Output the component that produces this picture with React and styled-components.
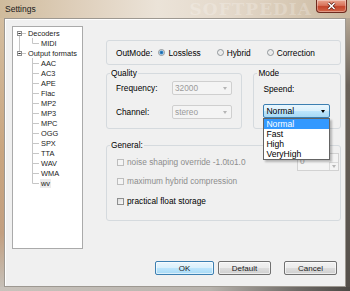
import React from 'react'
import styled, { createGlobalStyle } from 'styled-components'

const GlobalStyle = createGlobalStyle`
    html, body { margin:0; padding:0; }
    body {
        width:350px;
        height:291px;
        overflow:hidden;
        font-family:"Liberation Sans", Arial, sans-serif;
        font-size:8.3px;
        color:#000;
    }
`;

const treeItems = [
    { label: 'Decoders', cells: ['boxDown'] },
    { label: 'MIDI', cells: ['pipe', 'ell'] },
    { label: 'Output formats', cells: ['boxUp'] },
    ...['AAC', 'AC3', 'APE', 'Flac', 'MP2', 'MP3', 'MPC', 'OGG', 'SPX', 'TTA', 'WAV', 'WMA']
        .map(l => ({ label: l, cells: ['blank', 'tee'] })),
    { label: 'wv', cells: ['blank', 'ell'], selected: true },
];

function TreeGlyph({ kind }) {
    const line = '#c6c6c6'
    return (
        <svg width="13" height="10" viewBox="0 0 13 10">
            {kind === 'pipe' && <path d="M6.5 0V10" stroke={line} />}
            {kind === 'tee' && <path d="M6.5 0V10M6.5 5.5H13" stroke={line} />}
            {kind === 'ell' && <path d="M6.5 0V5.5H13" stroke={line} fill="none" />}
            {(kind === 'boxDown' || kind === 'boxUp') && (
                <>
                    <path d={kind === 'boxDown' ? 'M6.5 8V10M9 5.5H13' : 'M6.5 0V3M9 5.5H13'} stroke={line} />
                    <rect x="4.5" y="3.5" width="4" height="4" fill="#fff" stroke="#8f8f8f" />
                    <path d="M5.3 5.5H7.7" stroke="#2a2a2a" />
                </>
            )}
        </svg>
    )
}

function CloseGlyph() {
    return (
        <svg width="9" height="8" viewBox="0 0 9 8">
            <path d="M1.5 1L7.5 7M7.5 1L1.5 7" stroke="#5b1a10" strokeWidth="3" />
            <path d="M1.5 1L7.5 7M7.5 1L1.5 7" stroke="#fff" strokeWidth="1.6" />
        </svg>
    )
}

function Radio({ checked, children }) {
    return (
        <RadioOption>
            <RadioDot checked={checked} />
            {children}
        </RadioOption>
    )
}

function Check({ disabled, children }) {
    return (
        <CheckOption disabled={disabled}>
            <CheckBox disabled={disabled} />
            {children}
        </CheckOption>
    )
}

function App() {
    return (
        <Window>
            <GlobalStyle />
            <TitleBar>
                <Title>Settings</Title>
                <Watermark>SOFTPEDIA</Watermark>
                <CloseButton><CloseGlyph /></CloseButton>
            </TitleBar>
            <Middle>
                <LeftEdge />
                <Client>
                    <TopArea>
                        <Tree>
                            {treeItems.map(item => (
                                <TreeRow key={item.label}>
                                    {item.cells.map((c, i) => <TreeGlyph key={i} kind={c} />)}
                                    <TreeLabel selected={item.selected}>{item.label}</TreeLabel>
                                </TreeRow>
                            ))}
                        </Tree>
                        <Panel>
                            <OutModeBox>
                                <OutModeLabel>OutMode:</OutModeLabel>
                                <Radio checked>Lossless</Radio>
                                <Radio>Hybrid</Radio>
                                <Radio>Correction</Radio>
                            </OutModeBox>
                            <GroupRow>
                                <Group width="137px">
                                    <Legend>Quality</Legend>
                                    <QualityBody>
                                        <FieldRow>
                                            <FieldLabel>Frequency:</FieldLabel>
                                            <Combo disabled width="60px">32000<Arrow disabled /></Combo>
                                        </FieldRow>
                                        <FieldRow>
                                            <FieldLabel>Channel:</FieldLabel>
                                            <Combo disabled width="60px">stereo<Arrow disabled /></Combo>
                                        </FieldRow>
                                    </QualityBody>
                                </Group>
                                <Group width="88px">
                                    <Legend>Mode</Legend>
                                    <ModeBody>
                                        <div>Speend:</div>
                                        <ComboWrap>
                                            <Combo open width="67px">Normal<Arrow /></Combo>
                                            <DropList>
                                                <DropItem selected>Normal</DropItem>
                                                <DropItem>Fast</DropItem>
                                                <DropItem>High</DropItem>
                                                <DropItem>VeryHigh</DropItem>
                                            </DropList>
                                        </ComboWrap>
                                    </ModeBody>
                                </Group>
                            </GroupRow>
                            <GeneralGroup>
                                <Legend>General:</Legend>
                                <GeneralBody>
                                    <FirstCheckRow>
                                        <Check disabled>noise shaping override -1.0to1.0</Check>
                                        <Spin>0<SpinButton><Arrow disabled /></SpinButton></Spin>
                                    </FirstCheckRow>
                                    <CheckRow gap="5px">
                                        <Check disabled>maximum hybrid compression</Check>
                                    </CheckRow>
                                    <CheckRow gap="10px">
                                        <Check>practical float storage</Check>
                                    </CheckRow>
                                </GeneralBody>
                            </GeneralGroup>
                        </Panel>
                    </TopArea>
                    <ButtonRow>
                        <Button primary width="59px">OK</Button>
                        <Button width="53px">Default</Button>
                        <Button width="53px" gap="9px">Cancel</Button>
                    </ButtonRow>
                </Client>
                <RightEdge />
            </Middle>
            <BottomEdge />
        </Window>
    )
}

export default App;

const Window = styled.div`
    width:350px;
    height:291px;
    display:flex;
    flex-direction:column;
    overflow:hidden;
`;

const TitleBar = styled.div`
    height:18px;
    display:flex;
    align-items:flex-start;
    padding-left:5px;
    background: linear-gradient(90deg, #cfbb9c 0%, #ddcdb8 20%, #ebe3d8 45%, #e4d9cb 65%, #d6c7b2 85%, #c9b79f 100%);
`;

const Title = styled.div`
    line-height:18px;
    font-size:8.5px;
    color:#1b1b1b;
`;

const Watermark = styled.div`
    margin-left:auto;
    margin-right:4px;
    font-family:"DejaVu Serif", "Liberation Serif", serif;
    font-weight:bold;
    font-size:17px;
    line-height:18px;
    letter-spacing:1px;
    color:rgba(255,255,255,0.22);
`;

const CloseButton = styled.div`
    width:29px;
    height:12px;
    margin-right:3px;
    display:flex;
    align-items:center;
    justify-content:center;
    border:1px solid #6e2a1e;
    border-top:none;
    border-radius:0 0 4px 4px;
    background: linear-gradient(180deg, #e9a58f 0%, #d8735b 45%, #c4452b 55%, #d3674a 100%);
    box-shadow: inset 0 0 0 1px rgba(255,255,255,0.35);
`;

const Middle = styled.div`
    flex:1;
    display:flex;
    min-height:0;
`;

const LeftEdge = styled.div`
    width:4px;
    background: linear-gradient(180deg, #d4bea0 0%, #c9a57f 50%, #c29f80 80%, #c6c0b8 100%);
`;

const RightEdge = styled.div`
    width:4px;
    background: linear-gradient(180deg, #b5a795 0%, #6a625a 25%, #55504b 100%);
`;

const BottomEdge = styled.div`
    height:4px;
    background: linear-gradient(90deg, #c9c3bc 0%, #b8b3ad 60%, #6e6a66 85%, #4d4945 100%);
`;

const Client = styled.div`
    flex:1;
    display:flex;
    flex-direction:column;
    background:#f0f0f0;
    border:1px solid #9d9891;
    box-shadow: inset 1px 1px 0 #fff;
    padding:7px 4px 11px 7px;
`;

const TopArea = styled.div`
    display:flex;
    gap:23px;
`;

const Tree = styled.div`
    width:71px;
    height:223px;
    box-sizing:border-box;
    border:1px solid #aaaaaa;
    background:#fff;
    padding-top:1px;
    font-size:7.4px;
    color:#1a1a1a;
`;

const TreeRow = styled.div`
    height:10px;
    display:flex;
    align-items:center;
    svg { flex:none; display:block; }
`;

const TreeLabel = styled.span`
    margin-left:1px;
    padding:0 1px;
    line-height:9px;
    background:${p => p.selected ? '#ececec' : 'transparent'};
    white-space:nowrap;
`;

const Panel = styled.div`
    width:235px;
    padding-top:14px;
    display:flex;
    flex-direction:column;
`;

const OutModeBox = styled.div`
    height:25px;
    box-sizing:border-box;
    border:1px solid #d5dade;
    border-radius:3px;
    display:flex;
    align-items:center;
    padding-left:9px;
`;

const OutModeLabel = styled.span`
    margin-right:6px;
`;

const RadioOption = styled.span`
    display:inline-flex;
    align-items:center;
    gap:3px;
    margin-right:16px;
`;

const RadioDot = styled.span`
    width:7px;
    height:7px;
    box-sizing:border-box;
    border-radius:50%;
    border:1px solid #8f9599;
    background: ${p => p.checked
        ? 'radial-gradient(circle, #1c5f9e 0, #3a8fd0 1.6px, #eef3f6 2.4px)'
        : 'radial-gradient(circle, #e6e6e6 0, #f6f6f6 100%)'};
`;

const GroupRow = styled.div`
    display:flex;
    gap:11px;
    margin-top:3px;
`;

const Group = styled.fieldset`
    margin:0;
    padding:0 0 0 3px;
    width:${p => p.width};
    box-sizing:border-box;
    min-width:0;
    border:1px solid #d5dade;
    border-radius:3px;
`;

const Legend = styled.legend`
    padding:0 1px;
    line-height:10px;
    font-size:8.3px;
`;

const QualityBody = styled.div`
    padding:3px 6px 9px 6px;
    display:flex;
    flex-direction:column;
    gap:10px;
`;

const FieldRow = styled.div`
    display:flex;
    align-items:center;
`;

const FieldLabel = styled.span`
    width:56px;
`;

const ModeBody = styled.div`
    padding:6px 6px 0 6px;
    line-height:10px;
`;

const ComboWrap = styled.div`
    position:relative;
    margin-top:10px;
`;

const Combo = styled.div`
    width:${p => p.width};
    height:14px;
    box-sizing:border-box;
    display:flex;
    align-items:center;
    justify-content:space-between;
    padding:0 4px 0 2px;
    font-size:${p => p.open ? '8.6px' : '8.3px'};
    color:${p => p.disabled ? '#9a9a9a' : '#000'};
    border:1px solid ${p => p.open ? '#3c7fb1' : '#cfcfcf'};
    border-radius:2px;
    background:${p => p.open
        ? 'linear-gradient(180deg, #eaf6fd 0%, #d9f0fc 50%, #bee6fd 50%, #a7d9f5 100%)'
        : '#f4f4f4'};
`;

const Arrow = styled.span`
    width:0;
    height:0;
    border-left:2.5px solid transparent;
    border-right:2.5px solid transparent;
    border-top:3px solid ${p => p.disabled ? '#b5b5b5' : '#000'};
`;

const DropList = styled.div`
    position:absolute;
    top:14px;
    left:0;
    width:67px;
    box-sizing:border-box;
    border:1px solid #646464;
    background:#fff;
    box-shadow: 2px 2px 2px rgba(0,0,0,0.25);
    z-index:2;
`;

const DropItem = styled.div`
    height:10px;
    line-height:10px;
    padding-left:2px;
    font-size:8.6px;
    color:${p => p.selected ? '#fff' : '#000'};
    background:${p => p.selected ? '#3399ff' : 'transparent'};
`;

const GeneralGroup = styled(Group)`
    width:235px;
    margin-top:11px;
`;

const GeneralBody = styled.div`
    padding:3px 1px 14px 7px;
`;

const FirstCheckRow = styled.div`
    height:18px;
    display:flex;
    align-items:center;
    justify-content:space-between;
`;

const CheckRow = styled.div`
    height:10px;
    display:flex;
    align-items:center;
    margin-top:${p => p.gap};
`;

const CheckOption = styled.span`
    display:inline-flex;
    align-items:center;
    gap:3px;
    color:${p => p.disabled ? '#8d8d8d' : '#000'};
`;

const CheckBox = styled.span`
    width:7px;
    height:7px;
    box-sizing:border-box;
    border:1px solid ${p => p.disabled ? '#bdbdbd' : '#8e8f8f'};
    background:${p => p.disabled ? '#f4f4f4' : 'linear-gradient(135deg, #dcdcdc, #fbfbfb)'};
`;

const Spin = styled.div`
    width:42px;
    height:18px;
    box-sizing:border-box;
    border:1px solid #d2d2d2;
    background:#f4f4f4;
    display:flex;
    justify-content:space-between;
    padding-left:2px;
    color:#a0a0a0;
    line-height:14px;
`;

const SpinButton = styled.span`
    width:8px;
    margin-top:8px;
    border-left:1px solid #dadada;
    border-top:1px solid #dadada;
    display:flex;
    align-items:center;
    justify-content:center;
`;

const ButtonRow = styled.div`
    display:flex;
    justify-content:flex-end;
    margin-top:12px;
    padding-right:4px;
    gap:4px;
`;

const Button = styled.div`
    width:${p => p.width};
    height:14px;
    box-sizing:border-box;
    margin-left:${p => p.gap || 0};
    display:flex;
    align-items:center;
    justify-content:center;
    font-size:8px;
    color:#1a1a1a;
    border:1px solid ${p => p.primary ? '#3c7fb1' : '#707070'};
    border-radius:2px;
    background:${p => p.primary
        ? 'linear-gradient(180deg, #eaf6fd 0%, #d9f0fc 50%, #bee6fd 50%, #a7d9f5 100%)'
        : 'linear-gradient(180deg, #f2f2f2 0%, #ebebeb 50%, #dddddd 50%, #cfcfcf 100%)'};
    box-shadow: inset 0 0 0 1px rgba(255,255,255,0.6);
`;
